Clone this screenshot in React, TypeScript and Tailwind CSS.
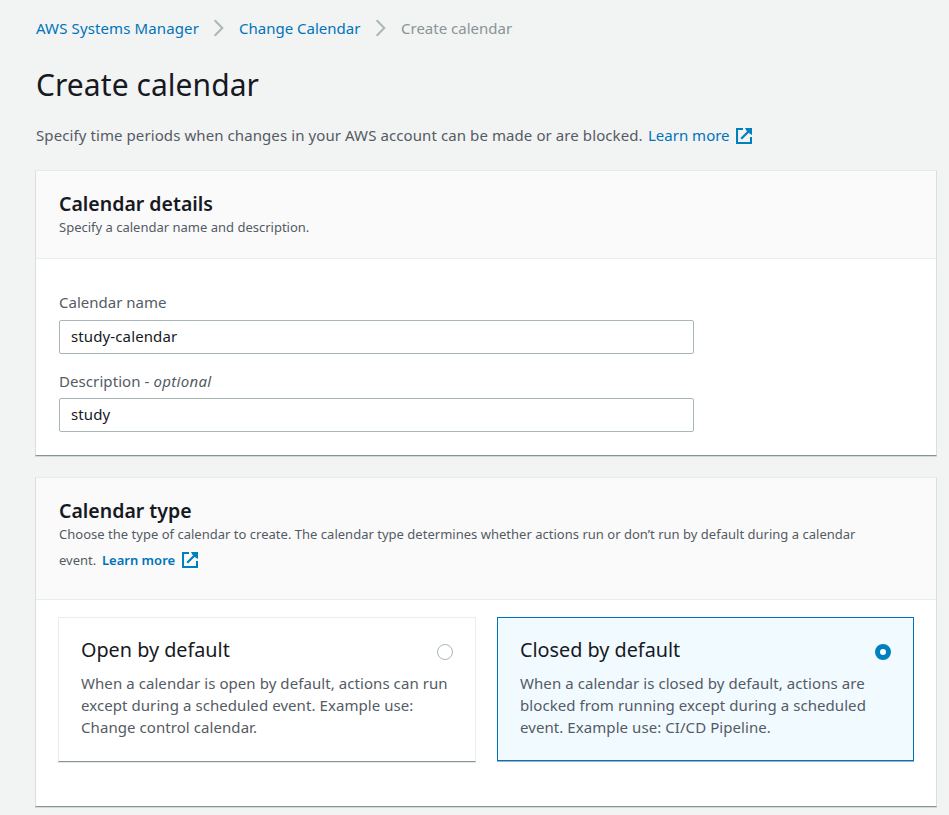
import type { ReactNode } from "react";

function Chevron() {
  return (
    <svg className="mt-0.5 h-[18px] w-3 shrink-0" viewBox="0 0 12 18" fill="none" stroke="#aab7b8" strokeWidth="2">
      <path d="M1.7 1.2 9.3 9l-7.6 7.8" />
    </svg>
  );
}

function ExternalIcon() {
  return (
    <svg className="h-4 w-4 shrink-0" viewBox="0 0 16 16" fill="none" stroke="#0080bf" strokeWidth="2.1">
      <path d="M7 1H1v14h14V9" />
      <path d="M13.5 2.5 5.2 10.8" strokeWidth="2.3" />
      <path d="M9 0h7v7l-2.2-1.2-3.6-3.6z" fill="#0080bf" stroke="none" />
    </svg>
  );
}

function Card({ children }: { children: ReactNode }) {
  return (
    <section className="w-[902px] border border-[#d9dede] border-t-[#e7eaea] border-b-[#879596] bg-white shadow-[0_1px_0_0_#d3d9da]">
      {children}
    </section>
  );
}

function CardTitle({ children }: { children: ReactNode }) {
  return <h2 className="h-7 pt-px text-[19.5px] leading-7 font-semibold text-[#16191f]">{children}</h2>;
}

function Field({ label, value }: { label: ReactNode; value: string }) {
  return (
    <label className="block">
      <span className="block h-[22px] leading-[22px] text-[#545b64]">{label}</span>
      <input
        readOnly
        value={value}
        className="block h-[34px] w-[635px] rounded-[2px] border border-[#aab7b8] bg-white px-[11px] pb-0.5 tracking-[0.12px] text-[#16191f] outline-none"
      />
    </label>
  );
}

function Tile({ title, lines, selected }: { title: string; lines: string[]; selected?: boolean }) {
  return (
    <div
      className={
        selected
          ? "h-36 w-[417px] border border-[#0073bb] bg-[#f1faff] pt-[18px] pl-[22px] pr-[22px] shadow-[0_1px_0_0_#a5b3b8]"
          : "h-[145px] w-[418px] border border-[#eaeded] border-b-[#879596] bg-white pt-[18px] pl-[22px] pr-[22px] shadow-[0_1px_0_0_#e3e7e7]"
      }
    >
      <div className="flex h-[26px] justify-between">
        <h3 className="pt-px text-[19.8px] leading-[26px] text-[#16191f]">{title}</h3>
        {selected ? (
          <span className="mt-2 h-4 w-4 rounded-full border-[5px] border-[#0080bf] bg-white" />
        ) : (
          <span className="mt-2 h-4 w-4 rounded-full border border-[#aab7b8] bg-white" />
        )}
      </div>
      <p className="mt-2.5 leading-[22px] tracking-[0.07px] whitespace-nowrap text-[#545b64]">
        {lines.map((line) => (
          <span key={line} className="block">
            {line}
          </span>
        ))}
      </p>
    </div>
  );
}

export default function App() {
  return (
    <main className="h-[815px] w-[949px] overflow-hidden bg-[#f2f3f3] pt-[17px] pl-[35px] font-['Noto_Sans',sans-serif] text-[15px]">
      <nav className="flex h-[22px] pl-px leading-[22px] whitespace-nowrap text-[#0073bb]">
        <a className="w-[177px] tracking-[0.12px]">AWS Systems Manager</a>
        <Chevron />
        <a className="ml-3.5 w-[136px]">Change Calendar</a>
        <Chevron />
        <span className="ml-3.5 text-[#879596]">Create calendar</span>
      </nav>
      <h1 className="mt-[26px] h-10 pl-px text-[30px] leading-10 tracking-[0.06px] text-[#16191f]">Create calendar</h1>
      <div className="mt-[19px] mb-6 flex h-[22px] pl-px leading-[22px] whitespace-nowrap text-[#545b64]">
        <span className="w-[612px] tracking-[0.09px]">
          Specify time periods when changes in your AWS account can be made or are blocked.
        </span>
        <a className="flex w-[104px] justify-between text-[#0073bb]">
          Learn more
          <span className="mt-1">
            <ExternalIcon />
          </span>
        </a>
      </div>

      <Card>
        <header className="h-[88px] border-b border-[#eaeded] bg-[#fafafa] pt-[18px] pl-[23px]">
          <CardTitle>Calendar details</CardTitle>
          <p className="text-[13px] leading-5 text-[#545b64]">Specify a calendar name and description.</p>
        </header>
        <div className="h-[196px] pt-8 pl-[23px]">
          <div className="[&_input]:mt-[7px]">
            <Field label="Calendar name" value="study-calendar" />
          </div>
          <div className="mt-4 [&_input]:mt-1.5">
            <Field
              label={
                <>
                  <span className="tracking-[0.08px]">Description - </span>
                  <i className="tracking-[0.3px]">optional</i>
                </>
              }
              value="study"
            />
          </div>
        </div>
      </Card>

      <div className="mt-[21px]">
        <Card>
          <header className="h-[122px] border-b border-[#eaeded] bg-[#fafafa] pt-[18px] pl-[23px]">
            <CardTitle>Calendar type</CardTitle>
            <div className="-mt-[3px] text-[13px] leading-[26px] whitespace-nowrap text-[#545b64]">
              <p className="tracking-[0.015px]">
                Choose the type of calendar to create. The calendar type determines whether actions run or don’t run by
                default during a calendar
              </p>
              <p className="flex">
                <span className="w-[43px]">event.</span>
                <a className="flex w-24 items-center justify-between font-semibold text-[#0073bb]">
                  Learn more
                  <ExternalIcon />
                </a>
              </p>
            </div>
          </header>
          <div className="flex h-[206px] gap-[21px] pt-[17px] pl-[22px]">
            <Tile
              title="Open by default"
              lines={[
                "When a calendar is open by default, actions can run",
                "except during a scheduled event. Example use:",
                "Change control calendar.",
              ]}
            />
            <Tile
              selected
              title="Closed by default"
              lines={[
                "When a calendar is closed by default, actions are",
                "blocked from running except during a scheduled",
                "event. Example use: CI/CD Pipeline.",
              ]}
            />
          </div>
        </Card>
      </div>
    </main>
  );
}
